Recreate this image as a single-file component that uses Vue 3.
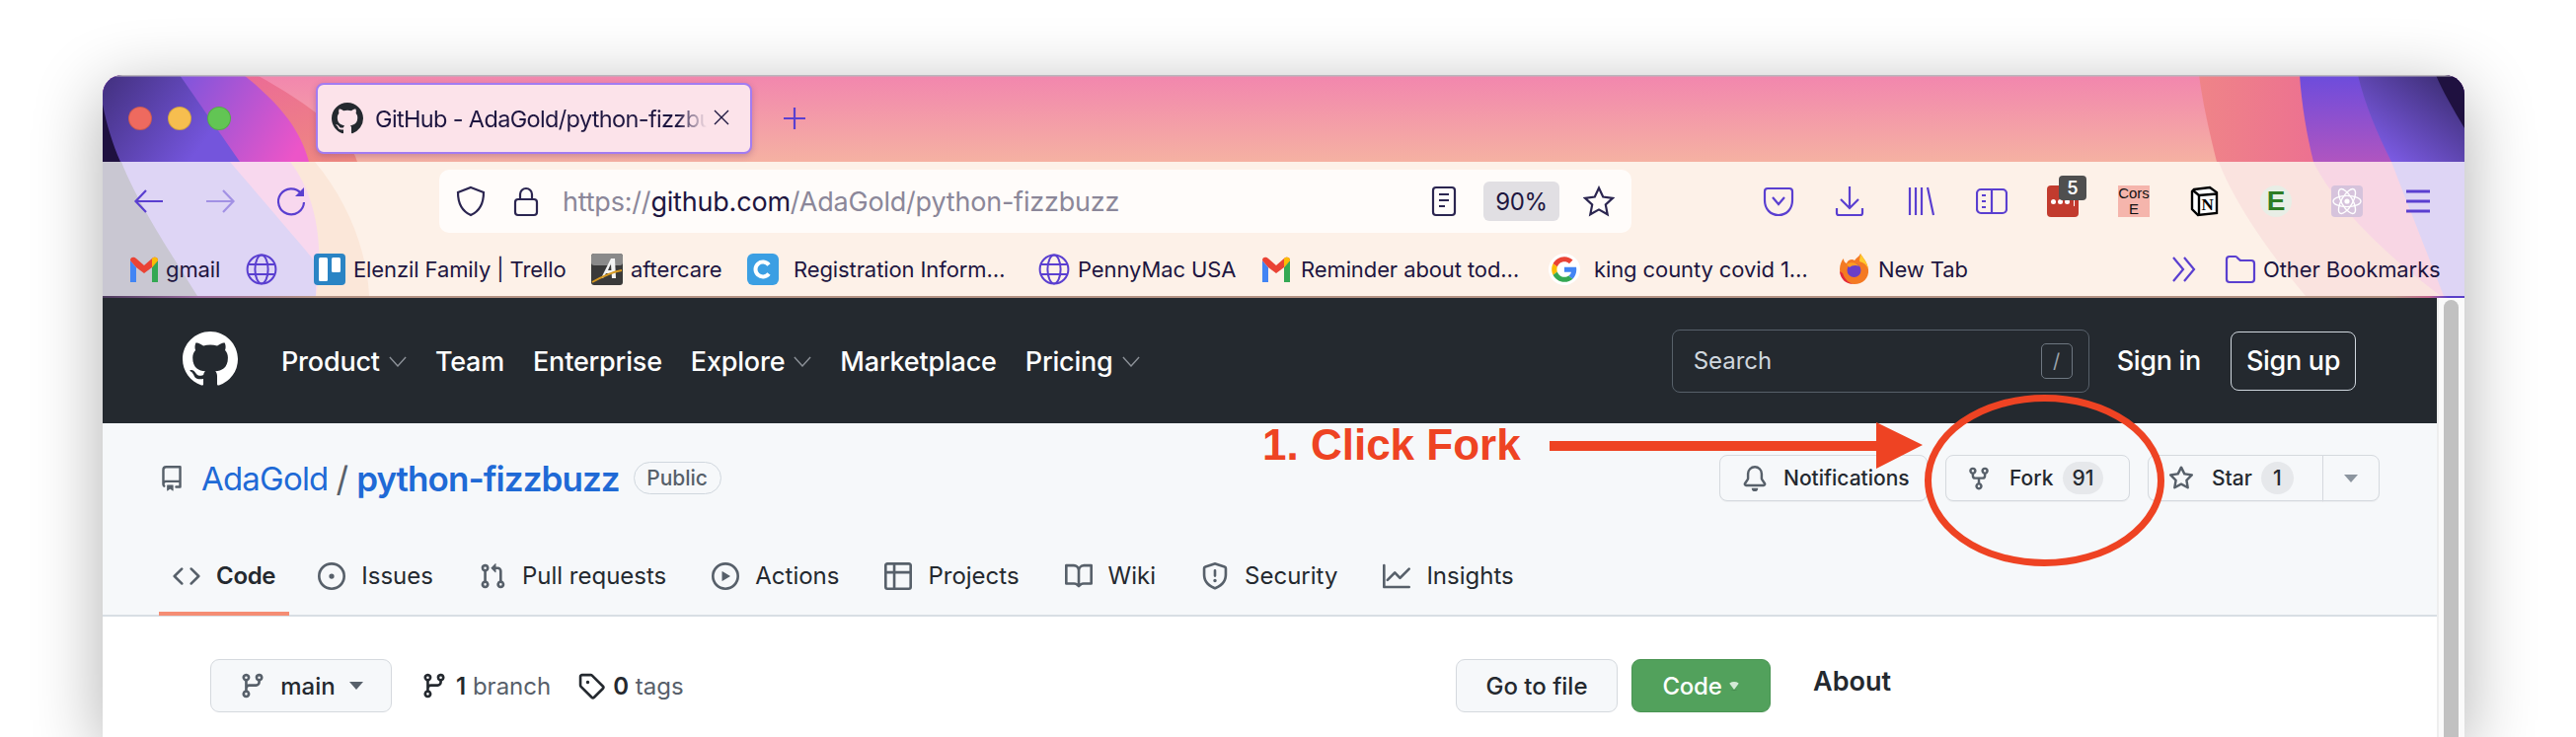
<template>
  <div class="page">
    <div class="window">
      <div class="chrome">
        <!-- wallpaper behind the browser toolbar -->
        <svg class="wallpaper" viewBox="0 0 2393 226" width="2393" height="226">
          <defs>
            <linearGradient id="pink" x1="0" y1="0" x2="0" y2="1">
              <stop offset="0" stop-color="#f286ae" />
              <stop offset="1" stop-color="#f5b1a2" />
            </linearGradient>
            <linearGradient id="salmon" x1="0" y1="0" x2="1" y2="1">
              <stop offset="0" stop-color="#ea5f9e" />
              <stop offset="1" stop-color="#ef8a80" />
            </linearGradient>
            <linearGradient id="magenta" gradientUnits="userSpaceOnUse" x1="78" y1="0" x2="200" y2="72">
              <stop offset="0" stop-color="#7d55dc" />
              <stop offset="1" stop-color="#ec55c8" />
            </linearGradient>
            <linearGradient id="violet" gradientUnits="userSpaceOnUse" x1="0" y1="0" x2="100" y2="72">
              <stop offset="0" stop-color="#42307e" />
              <stop offset="1" stop-color="#7455dc" />
            </linearGradient>
            <linearGradient id="rSalmon" x1="0" y1="0" x2="1" y2="0">
              <stop offset="0" stop-color="#ef8488" />
              <stop offset="1" stop-color="#e9589c" />
            </linearGradient>
            <linearGradient id="rPurple" x1="0" y1="0" x2="0" y2="1">
              <stop offset="0" stop-color="#6c4cdc" />
              <stop offset="1" stop-color="#b055c0" />
            </linearGradient>
            <linearGradient id="rViolet" gradientUnits="userSpaceOnUse" x1="2385" y1="0" x2="2315" y2="88">
              <stop offset="0" stop-color="#382a6c" />
              <stop offset="1" stop-color="#7d5ce6" />
            </linearGradient>
            <linearGradient id="edge" x1="0" y1="0" x2="1" y2="0">
              <stop offset="0" stop-color="#4b3a5c" />
              <stop offset="0.04" stop-color="#9a6a9e" />
              <stop offset="0.09" stop-color="#b39283" />
              <stop offset="0.97" stop-color="#b39283" />
              <stop offset="0.985" stop-color="#c2668e" />
              <stop offset="0.993" stop-color="#5a40c8" />
            </linearGradient>
          </defs>
          <rect width="2393" height="88" fill="url(#pink)" />
          <path d="M0 0L156 0C210 30 250 60 258 88L0 88Z" fill="url(#salmon)" />
          <path d="M0 0L143 0C180 30 200 55 209 88L0 88Z" fill="url(#magenta)" />
          <path d="M0 0L78 0L139 88L0 88Z" fill="url(#violet)" />
          <path d="M0 30C4 50 10 70 18 88L0 88Z" fill="#1f1140" />
          <path d="M2124 0L2393 0L2393 88L2142 88C2135 60 2128 30 2124 0Z" fill="url(#rSalmon)" />
          <path d="M2226 0L2393 0L2393 88L2240 88C2233 60 2228 30 2226 0Z" fill="url(#rPurple)" />
          <path d="M2285 0L2393 0L2393 88L2319 88C2305 60 2292 30 2285 0Z" fill="url(#rViolet)" />
          <path d="M2364 0L2393 0L2393 54C2382 35 2370 15 2364 0Z" fill="#1f1140" />
          <rect width="2393" height="1.5" fill="#b9b5bb" />

          <rect y="88" width="2393" height="136" fill="#fdf1e8" />
          <path d="M0 88L215 88C250 130 268 180 270 224L0 224Z" fill="#fbe7d9" />
          <path d="M0 88L190 88C215 120 225 170 216 224L0 224Z" fill="#f8d8ee" />
          <path d="M0 88L129 88C165 130 195 165 216 190L216 224L0 224Z" fill="#ded5f5" />
          <path d="M0 88L19 88C35 130 75 190 96 224L0 224Z" fill="#c9c7d2" />
          <path d="M2144 88L2393 88L2393 224L2232 224C2195 180 2160 130 2144 88Z" fill="#fae3df" />
          <path d="M2240 88L2393 88L2393 224L2369 224C2310 180 2260 130 2240 88Z" fill="#f8d6e4" />
          <path d="M2319 88L2393 88L2393 224L2372 224C2355 180 2335 130 2319 88Z" fill="#ded5f5" />
          <rect y="224" width="2393" height="2" fill="url(#edge)" />
        </svg>

        <div class="titlebar">
          <div class="lights">
            <span class="light red"></span>
            <span class="light yellow"></span>
            <span class="light green"></span>
          </div>
          <div class="tab">
            <svg class="tab-icon" viewBox="0 0 16 16"><path :d="oct.github" fill="#24292f" /></svg>
            <span class="tab-title">GitHub - AdaGold/python-fizzbuzz</span>
            <svg class="tab-close" viewBox="0 0 16 16"><path d="M1 1L15 15M15 1L1 15" stroke="#1e1640" stroke-width="1.4" fill="none" /></svg>
          </div>
          <svg class="new-tab" viewBox="0 0 24 24"><path d="M12 1V23M1 12H23" stroke="#5a3fd0" stroke-width="2.2" fill="none" /></svg>
        </div>

        <div class="toolbar">
          <div class="nav-btns">
            <span class="slot"><svg class="ico" viewBox="0 0 32 32"><path d="M30 16H3M13 5L2.5 16L13 27" /></svg></span>
            <span class="slot faded"><svg class="ico" viewBox="0 0 32 32"><path d="M2 16H29M19 5L29.5 16L19 27" /></svg></span>
            <span class="slot">
              <svg class="ico" viewBox="0 0 32 32">
                <path d="M26 8A13 13 0 1 0 29 17" />
                <path d="M29 2V11H20Z" fill="#5a3fd0" stroke="none" />
              </svg>
            </span>
          </div>
          <div class="urlbar">
            <svg class="url-ico shield" viewBox="0 0 32 32"><path d="M16 2L29 7C29 18 25 26 16 30C7 26 3 18 3 7Z" /></svg>
            <svg class="url-ico lock" viewBox="0 0 32 32"><rect x="5" y="14" width="22" height="16" rx="3" /><path d="M10 14V9A6 6 0 0 1 22 9V14" /></svg>
            <span class="url"><span class="dim">https://</span>github.com<span class="dim">/AdaGold/python-fizzbuzz</span></span>
            <svg class="url-ico reader" viewBox="0 0 32 32"><rect x="5" y="2" width="22" height="28" rx="3" /><path d="M11 9H21M11 15H21M11 21H17" /></svg>
            <span class="zoom-level">90%</span>
            <svg class="url-ico star" viewBox="0 0 32 32"><path d="M16 2.5L20.2 11.5L30 12.8L22.8 19.5L24.7 29.3L16 24.4L7.3 29.3L9.2 19.5L2 12.8L11.8 11.5Z" /></svg>
          </div>
          <div class="tool-icons">
            <span class="slot"><svg class="ico" viewBox="0 0 32 32"><path d="M5 3H27A3 3 0 0 1 30 6V15C30 24 24 30 16 30C8 30 2 24 2 15V6A3 3 0 0 1 5 3Z" /><path d="M10 12L16 19L22 12" /></svg></span>
            <span class="slot"><svg class="ico" viewBox="0 0 32 32"><path d="M16 1V22M7 14L16 23L25 14M3 23V28A2 2 0 0 0 5 30H27A2 2 0 0 0 29 28V23" /></svg></span>
            <span class="slot"><svg class="ico" viewBox="0 0 32 32"><path d="M5 2V30M11 2V30M17 2V30M23 2L29 30" /></svg></span>
            <span class="slot"><svg class="ico" viewBox="0 0 32 32"><rect x="1" y="4" width="30" height="24" rx="4" /><path d="M16 4V28M6 10H10M6 16H10M6 22H10" /></svg></span>
            <span class="slot">
              <span class="lastpass"><i></i><i></i><i></i><b></b></span>
              <span class="badge">5</span>
            </span>
            <span class="slot"><span class="cors">Cors<br />E</span></span>
            <span class="slot">
              <svg class="ext" viewBox="0 0 32 32">
                <path d="M5 4L21 2L28 7V28L9 30L3 24V6Z" fill="#fff" stroke="#000" stroke-width="2.4" />
                <path d="M4 5L10 10L28 8.5" fill="none" stroke="#000" stroke-width="2.4" />
                <path d="M10 10V29" stroke="#000" stroke-width="2.4" />
                <text x="18.6" y="25" text-anchor="middle" font-family="Liberation Serif, serif" font-weight="700" font-size="17">N</text>
              </svg>
            </span>
            <span class="slot"><span class="evernote">E</span></span>
            <span class="slot">
              <span class="react">
                <svg class="ext" viewBox="0 0 32 32" fill="none" stroke="#fff" stroke-width="1.4">
                  <ellipse cx="16" cy="16" rx="14" ry="5.6" />
                  <ellipse cx="16" cy="16" rx="14" ry="5.6" transform="rotate(60 16 16)" />
                  <ellipse cx="16" cy="16" rx="14" ry="5.6" transform="rotate(120 16 16)" />
                  <circle cx="16" cy="16" r="2.6" fill="#fff" stroke="none" />
                </svg>
              </span>
            </span>
            <span class="slot"><svg class="ico" viewBox="0 0 32 32"><path d="M4 6H28M4 16H28M4 26H28" stroke-width="2.8" /></svg></span>
          </div>
        </div>

        <div class="bookmarks">
          <span v-for="b in bookmarks" :key="b.label" class="bm" :style="{ width: b.w + 'px', gap: b.gap + 'px' }">
            <svg v-if="b.icon === 'gmail'" class="bm-ico" viewBox="0 0 32 32">
              <path d="M2 7V29H8V14Z" fill="#4285f4" />
              <path d="M30 7V29H24V14Z" fill="#34a853" />
              <path d="M2 7C2 3 6 3 8 5L16 12L24 5C26 3 30 3 30 7L24 14L16 20L8 14Z" fill="#ea4335" />
              <path d="M24 5C26 3 30 3 30 7L24 14Z" fill="#fbbc04" />
            </svg>
            <svg v-else-if="b.icon === 'globe'" class="bm-ico globe" viewBox="0 0 32 32">
              <circle cx="16" cy="16" r="14.4" />
              <ellipse cx="16" cy="16" rx="6.6" ry="14.4" />
              <path d="M2 11H30M2 21H30" />
            </svg>
            <svg v-else-if="b.icon === 'trello'" class="bm-ico" viewBox="0 0 32 32">
              <rect width="32" height="32" rx="4" fill="#2a84c4" />
              <rect x="5" y="4" width="9" height="24" rx="1.5" fill="#fff" />
              <rect x="18" y="4" width="9" height="15" rx="1.5" fill="#fff" />
            </svg>
            <svg v-else-if="b.icon === 'aftercare'" class="bm-ico" viewBox="0 0 32 32">
              <rect width="32" height="32" rx="3" fill="#3a3a3a" />
              <rect width="32" height="12" rx="3" fill="#8a8a8a" />
              <path d="M10 25L20 5H24L25 25H21L20.6 20H15L12 25ZM17 17H20.4L20 10Z" fill="#f4f4f4" />
              <path d="M1 29C10 24 20 19 31 17" stroke="#d69a24" stroke-width="2" fill="none" />
            </svg>
            <svg v-else-if="b.icon === 'reg'" class="bm-ico" viewBox="0 0 32 32">
              <rect width="32" height="32" rx="6" fill="#3b9fe3" />
              <path d="M22 11.5A7.5 7.5 0 1 0 22 20.5" stroke="#fff" stroke-width="4" fill="none" />
            </svg>
            <svg v-else-if="b.icon === 'google'" class="bm-ico" viewBox="-6 -6 60 60">
              <circle cx="24" cy="24" r="30" fill="#fff" />
              <path d="M24 9.5c3.54 0 6.71 1.22 9.21 3.6l6.85-6.85C35.9 2.38 30.47 0 24 0 14.62 0 6.51 5.38 2.56 13.22l7.98 6.19C12.43 13.72 17.74 9.5 24 9.5z" fill="#ea4335" />
              <path d="M46.98 24.55c0-1.57-.15-3.09-.38-4.55H24v9.02h12.94c-.58 2.96-2.26 5.48-4.78 7.18l7.73 6c4.51-4.18 7.09-10.36 7.09-17.65z" fill="#4285f4" />
              <path d="M10.53 28.59c-.48-1.45-.76-2.99-.76-4.59s.27-3.14.76-4.59l-7.98-6.19C.92 16.46 0 20.12 0 24c0 3.88.92 7.54 2.56 10.78l7.97-6.19z" fill="#fbbc05" />
              <path d="M24 48c6.48 0 11.93-2.13 15.89-5.81l-7.73-6c-2.15 1.45-4.92 2.3-8.16 2.3-6.26 0-11.57-4.22-13.47-9.91l-7.98 6.19C6.51 42.62 14.62 48 24 48z" fill="#34a853" />
            </svg>
            <svg v-else-if="b.icon === 'firefox'" class="bm-ico" viewBox="0 0 32 32">
              <path d="M22 0C24 4 29 8 30 16C31 25 24 31 16 31C8 31 1 25 1 16C1 11 3 7 5 5C5 8 6 9 8 10C9 6 14 5 16 7C18 4 21 3 22 0Z" fill="#f47a23" />
              <path d="M22 0C24 4 29 8 30 16C28 11 25 9 21 8C21 5 22 3 22 0Z" fill="#ffcb2e" />
              <path d="M4 20C6 27 12 31 16 31C8 31 2 27 1 18Z" fill="#e3283a" />
              <circle cx="15.5" cy="17" r="7" fill="#6a3fc8" />
              <path d="M8 11C12 8 18 9 21 13C17 11 13 12 11 14Z" fill="#ff9d22" />
            </svg>
            <span class="bm-label">{{ b.label }}</span>
          </span>
          <svg class="more" viewBox="0 0 28 28"><path d="M3 2L13 14L3 26M14 2L24 14L14 26" /></svg>
          <svg class="folder" viewBox="0 0 32 32"><path d="M2 6A3 3 0 0 1 5 3H11C13 3 14 7 17 7H27A3 3 0 0 1 30 10V26A3 3 0 0 1 27 29H5A3 3 0 0 1 2 26Z" /></svg>
          <span class="bm-label other">Other Bookmarks</span>
        </div>
      </div>

      <div class="viewport">
        <div class="content">
          <header class="gh-header">
            <svg class="gh-logo" viewBox="0 0 16 16"><path :d="oct.github" fill="#fff" /></svg>
            <nav class="gh-nav">
              <span v-for="n in navItems" :key="n.label" class="gh-link">
                {{ n.label }}
                <svg v-if="n.caret" class="chev" viewBox="0 0 20 12"><path d="M1 1L10 11L19 1" /></svg>
              </span>
            </nav>
            <div class="search">
              <span>Search</span>
              <span class="slash">/</span>
            </div>
            <span class="sign-in">Sign in</span>
            <span class="sign-up">Sign up</span>
          </header>

          <section class="repo-head">
            <div class="repo-row">
              <svg class="oct repo-ico" viewBox="0 0 16 16"><path :d="oct.repo" /></svg>
              <a class="owner">AdaGold</a>
              <span class="sep">/</span>
              <a class="repo-name">python-fizzbuzz</a>
              <span class="public">Public</span>
              <div class="actions">
                <button class="act notif">
                  <svg class="oct" viewBox="0 0 16 16"><path :d="oct.bell" /></svg>
                  Notifications
                </button>
                <button class="act fork">
                  <svg class="oct" viewBox="0 0 16 16"><path :d="oct.fork" /></svg>
                  Fork
                  <span class="count">91</span>
                </button>
                <div class="star-group">
                  <button class="act star-btn">
                    <svg class="oct" viewBox="0 0 16 16"><path :d="oct.star" /></svg>
                    Star
                    <span class="count">1</span>
                  </button>
                  <button class="act star-more"><span class="caret"></span></button>
                </div>
              </div>
            </div>
            <nav class="tabs">
              <a v-for="t in tabs" :key="t.label" class="tabitem" :class="{ active: t.active }">
                <svg class="oct" viewBox="0 0 16 16"><path :d="t.icon" /></svg>
                {{ t.label }}
              </a>
            </nav>
          </section>

          <section class="repo-body">
            <div class="file-nav">
              <button class="btn branch-btn">
                <svg class="oct" viewBox="0 0 16 16"><path :d="oct.branch" /></svg>
                main
                <span class="caret dark"></span>
              </button>
              <span class="meta meta-branch">
                <svg class="oct strong" viewBox="0 0 16 16"><path :d="oct.branch" /></svg>
                <span><b>1</b> branch</span>
              </span>
              <span class="meta">
                <svg class="oct strong" viewBox="0 0 16 16"><path :d="oct.tag" /></svg>
                <span><b>0</b> tags</span>
              </span>
              <button class="btn goto">Go to file</button>
              <button class="btn code-btn">Code <span class="caret light"></span></button>
            </div>
            <h2 class="about">About</h2>
          </section>
        </div>
        <div class="scrollbar"><div class="thumb"></div></div>
      </div>

      <!-- red markup drawn on top of the screenshot -->
      <div class="callout">1. Click Fork</div>
      <svg class="markup" viewBox="0 0 2393 671" width="2393" height="671">
        <path d="M1466 371H1797V352L1844 375L1797 399V381H1466Z" fill="#ee4323" />
        <ellipse cx="1967.5" cy="411" rx="118" ry="83.5" fill="none" stroke="#ee4323" stroke-width="7" />
      </svg>
    </div>
  </div>
</template>

<script setup>
const oct = {
  github: 'M8 0C3.58 0 0 3.58 0 8c0 3.54 2.29 6.53 5.47 7.59.4.07.55-.17.55-.38 0-.19-.01-.82-.01-1.49-2.01.37-2.53-.49-2.69-.94-.09-.23-.48-.94-.82-1.13-.28-.15-.68-.52-.01-.53.63-.01 1.08.58 1.23.82.72 1.21 1.87.87 2.33.66.07-.52.28-.87.51-1.07-1.78-.2-3.64-.89-3.64-3.95 0-.87.31-1.59.82-2.15-.08-.2-.36-1.02.08-2.12 0 0 .67-.21 2.2.82.64-.18 1.32-.27 2-.27.68 0 1.36.09 2 .27 1.53-1.04 2.2-.82 2.2-.82.44 1.1.16 1.92.08 2.12.51.56.82 1.27.82 2.15 0 3.07-1.87 3.75-3.65 3.95.29.25.54.73.54 1.48 0 1.07-.01 1.93-.01 2.2 0 .21.15.46.55.38A8.013 8.013 0 0016 8c0-4.42-3.58-8-8-8z',
  repo: 'M2 2.5A2.5 2.5 0 014.5 0h8.75a.75.75 0 01.75.75v12.5a.75.75 0 01-.75.75h-2.5a.75.75 0 110-1.5h1.75v-2h-8a1 1 0 00-.714 1.7.75.75 0 01-1.072 1.05A2.495 2.495 0 012 11.5v-9zm10.5-1V9h-8c-.356 0-.694.074-1 .208V2.5a1 1 0 011-1h8zM5 12.25v3.25a.25.25 0 00.4.2l1.45-1.087a.25.25 0 01.3 0L8.6 15.7a.25.25 0 00.4-.2v-3.25a.25.25 0 00-.25-.25h-3.5a.25.25 0 00-.25.25z',
  bell: 'M8 16a2 2 0 001.985-1.75c.017-.137-.097-.25-.235-.25h-3.5c-.138 0-.252.113-.235.25A2 2 0 008 16z M8 1.5A3.5 3.5 0 004.5 5v2.947c0 .346-.102.683-.294.97l-1.703 2.556a.018.018 0 00-.003.01l.001.006c0 .002.002.004.004.006a.017.017 0 00.006.004l.007.001h10.964l.007-.001a.016.016 0 00.006-.004.016.016 0 00.004-.006l.001-.007a.017.017 0 00-.003-.01l-1.703-2.554a1.75 1.75 0 01-.294-.97V5A3.5 3.5 0 008 1.5zM3 5a5 5 0 0110 0v2.947c0 .05.015.098.042.139l1.703 2.555A1.518 1.518 0 0113.482 13H2.518a1.518 1.518 0 01-1.263-2.36l1.703-2.554A.25.25 0 003 7.947V5z',
  fork: 'M5 3.25a.75.75 0 11-1.5 0 .75.75 0 011.5 0zm0 2.122a2.25 2.25 0 10-1.5 0v.878A2.25 2.25 0 005.75 8.5h1.5v2.128a2.251 2.251 0 101.5 0V8.5h1.5a2.25 2.25 0 002.25-2.25v-.878a2.25 2.25 0 10-1.5 0v.878a.75.75 0 01-.75.75h-4.5A.75.75 0 015 6.25v-.878zm3.75 7.378a.75.75 0 11-1.5 0 .75.75 0 011.5 0zm3-8.75a.75.75 0 100-1.5.75.75 0 000 1.5z',
  star: 'M8 .25a.75.75 0 01.673.418l1.882 3.815 4.21.612a.75.75 0 01.416 1.279l-3.046 2.97.719 4.192a.75.75 0 01-1.088.791L8 12.347l-3.766 1.98a.75.75 0 01-1.088-.79l.72-4.194L.818 6.374a.75.75 0 01.416-1.28l4.21-.611L7.327.668A.75.75 0 018 .25zm0 2.445L6.615 5.5a.75.75 0 01-.564.41l-3.097.45 2.24 2.184a.75.75 0 01.216.664l-.528 3.084 2.769-1.456a.75.75 0 01.698 0l2.77 1.456-.53-3.084a.75.75 0 01.216-.664l2.24-2.183-3.096-.45a.75.75 0 01-.564-.41L8 2.694v.001z',
  code: 'M4.72 3.22a.75.75 0 011.06 1.06L2.06 8l3.72 3.72a.75.75 0 11-1.06 1.06L.47 8.53a.75.75 0 010-1.06l4.25-4.25zm6.56 0a.75.75 0 10-1.06 1.06L13.94 8l-3.72 3.72a.75.75 0 101.06 1.06l4.25-4.25a.75.75 0 000-1.06l-4.25-4.25z',
  issue: 'M8 9.5a1.5 1.5 0 100-3 1.5 1.5 0 000 3z M8 0a8 8 0 100 16A8 8 0 008 0zM1.5 8a6.5 6.5 0 1113 0 6.5 6.5 0 01-13 0z',
  pull: 'M7.177 3.073L9.573.677A.25.25 0 0110 .854v4.792a.25.25 0 01-.427.177L7.177 3.427a.25.25 0 010-.354zM3.75 2.5a.75.75 0 100 1.5.75.75 0 000-1.5zm-2.25.75a2.25 2.25 0 113 2.122v5.256a2.251 2.251 0 11-1.5 0V5.372A2.25 2.25 0 011.5 3.25zM11 2.5h-1V4h1a1 1 0 011 1v5.628a2.251 2.251 0 101.5 0V5A2.5 2.5 0 0011 2.5zm1 10.25a.75.75 0 111.5 0 .75.75 0 01-1.5 0zM3.75 12a.75.75 0 100 1.5.75.75 0 000-1.5z',
  play: 'M1.5 8a6.5 6.5 0 1113 0 6.5 6.5 0 01-13 0zM8 0a8 8 0 100 16A8 8 0 008 0zM6.379 5.227A.25.25 0 006 5.442v5.117a.25.25 0 00.379.214l4.264-2.559a.25.25 0 000-.428L6.379 5.227z',
  table: 'M0 1.75C0 .784.784 0 1.75 0h12.5C15.216 0 16 .784 16 1.75v12.5A1.75 1.75 0 0114.25 16H1.75A1.75 1.75 0 010 14.25V1.75zM1.5 6.5v7.75c0 .138.112.25.25.25H5v-8H1.5zM5 5H1.5V1.75a.25.25 0 01.25-.25H5V5zm1.5 1.5v8h7.75a.25.25 0 00.25-.25V6.5h-8zm8-1.5h-8V1.5h7.75a.25.25 0 01.25.25V5z',
  book: 'M0 1.75A.75.75 0 01.75 1h4.253c1.227 0 2.317.59 3 1.501A3.744 3.744 0 0111.006 1h4.245a.75.75 0 01.75.75v10.5a.75.75 0 01-.75.75h-4.507a2.25 2.25 0 00-1.591.659l-.622.621a.75.75 0 01-1.06 0l-.622-.621A2.25 2.25 0 005.258 13H.75a.75.75 0 01-.75-.75V1.75zm8.755 3a2.25 2.25 0 012.25-2.25H14.5v9h-3.757c-.71 0-1.4.201-1.992.572l.004-7.322zm-1.504 7.324l.004-5.073-.002-2.253A2.25 2.25 0 005.003 2.5H1.5v9h3.757a3.75 3.75 0 011.994.574z',
  shield: 'M7.467.133a1.75 1.75 0 011.066 0l5.25 1.68A1.75 1.75 0 0115 3.48V7c0 1.566-.32 3.182-1.303 4.682-.983 1.498-2.585 2.813-5.032 3.855a1.7 1.7 0 01-1.33 0c-2.447-1.042-4.049-2.357-5.032-3.855C1.32 10.182 1 8.566 1 7V3.48a1.75 1.75 0 011.217-1.667l5.25-1.68zm.61 1.429a.25.25 0 00-.153 0l-5.25 1.68a.25.25 0 00-.174.238V7c0 1.358.275 2.666 1.057 3.86.784 1.194 2.121 2.34 4.366 3.297a.2.2 0 00.154 0c2.245-.956 3.582-2.104 4.366-3.298C13.225 9.666 13.5 8.36 13.5 7V3.48a.25.25 0 00-.174-.237l-5.25-1.68zM9 10.5a1 1 0 11-2 0 1 1 0 012 0zm-.25-5.75a.75.75 0 10-1.5 0v3a.75.75 0 001.5 0v-3z',
  graph: 'M1.5 1.75a.75.75 0 00-1.5 0v12.5c0 .414.336.75.75.75h14.5a.75.75 0 000-1.5H1.5V1.75zm14.28 2.53a.75.75 0 00-1.06-1.06L10 7.94 7.53 5.47a.75.75 0 00-1.06 0L2.22 9.72a.75.75 0 001.06 1.06L7 7.06l2.47 2.47a.75.75 0 001.06 0l5.25-5.25z',
  branch: 'M11.75 2.5a.75.75 0 100 1.5.75.75 0 000-1.5zm-2.25.75a2.25 2.25 0 113 2.122V6A2.5 2.5 0 0110 8.5H6a1 1 0 00-1 1v1.128a2.251 2.251 0 11-1.5 0V5.372a2.25 2.25 0 111.5 0v1.836A2.492 2.492 0 016 7h4a1 1 0 001-1v-.628A2.25 2.25 0 019.5 3.25zM4.25 12a.75.75 0 100 1.5.75.75 0 000-1.5zM3.5 3.25a.75.75 0 111.5 0 .75.75 0 01-1.5 0z',
  tag: 'M2.5 7.775V2.75a.25.25 0 01.25-.25h5.025a.25.25 0 01.177.073l6.25 6.25a.25.25 0 010 .354l-5.025 5.025a.25.25 0 01-.354 0l-6.25-6.25a.25.25 0 01-.073-.177zm-1.5 0V2.75C1 1.784 1.784 1 2.75 1h5.025c.464 0 .91.184 1.238.513l6.25 6.25a1.75 1.75 0 010 2.474l-5.026 5.026a1.75 1.75 0 01-2.474 0l-6.25-6.25A1.75 1.75 0 011 7.775zM6 5a1 1 0 100 2 1 1 0 000-2z'
}

const bookmarks = [
  { label: 'gmail', icon: 'gmail', w: 119, gap: 6 },
  { label: '', icon: 'globe', w: 69, gap: 0 },
  { label: 'Elenzil Family | Trello', icon: 'trello', w: 281, gap: 8 },
  { label: 'aftercare', icon: 'aftercare', w: 158, gap: 8 },
  { label: 'Registration Inform…', icon: 'reg', w: 295, gap: 15 },
  { label: 'PennyMac USA', icon: 'globe', w: 225, gap: 8 },
  { label: 'Reminder about tod…', icon: 'gmail', w: 292, gap: 9 },
  { label: 'king county covid 1…', icon: 'google', w: 294, gap: 14 },
  { label: 'New Tab', icon: 'firefox', w: 130, gap: 8 }
]

const navItems = [
  { label: 'Product', caret: true },
  { label: 'Team' },
  { label: 'Enterprise' },
  { label: 'Explore', caret: true },
  { label: 'Marketplace' },
  { label: 'Pricing', caret: true }
]

const tabs = [
  { label: 'Code', icon: oct.code, active: true },
  { label: 'Issues', icon: oct.issue },
  { label: 'Pull requests', icon: oct.pull },
  { label: 'Actions', icon: oct.play },
  { label: 'Projects', icon: oct.table },
  { label: 'Wiki', icon: oct.book },
  { label: 'Security', icon: oct.shield },
  { label: 'Insights', icon: oct.graph }
]
</script>

<style>
html, body {
  margin: 0;
  background: #fff;
  overflow: hidden;
}
</style>

<style scoped>
.page {
  height: 747px;
  overflow: hidden;
  padding: 76px 0 0 104px;
  box-sizing: border-box;
  font-family: Inter, "Noto Sans", sans-serif;
  color: #24292f;
}

.window {
  position: relative;
  width: 2393px;
  height: 671px;
  border-radius: 20px 20px 0 0;
  overflow: hidden;
  box-shadow: 0 16px 70px rgba(0, 0, 0, 0.32);
}

/* browser chrome */
.chrome {
  position: relative;
  height: 226px;
}

.wallpaper {
  position: absolute;
  left: 0;
  top: 0;
}

.titlebar {
  position: relative;
  height: 88px;
  display: flex;
  align-items: center;
  padding-left: 26px;
}

.lights {
  display: flex;
  gap: 16px;
}

.light {
  width: 24px;
  height: 24px;
  border-radius: 50%;
  box-sizing: border-box;
  border: 1px solid rgba(0, 0, 0, 0.14);
}

.red { background: #ee6a5f; }
.yellow { background: #f6be4f; }
.green { background: #62c554; }

.tab {
  margin-left: 86px;
  width: 442px;
  height: 72px;
  box-sizing: border-box;
  display: flex;
  align-items: center;
  padding-left: 14px;
  background: #fce3ea;
  border: 2px solid #a27cf2;
  border-radius: 8px;
  box-shadow: 0 2px 6px rgba(90, 50, 120, 0.3);
}

.tab-icon {
  width: 32px;
  height: 32px;
  flex: none;
}

.tab-title {
  margin-left: 12px;
  width: 336px;
  flex: none;
  overflow: hidden;
  white-space: nowrap;
  font-size: 23.5px;
  letter-spacing: -0.65px;
  color: #1e1640;
  -webkit-mask-image: linear-gradient(90deg, #000 91%, transparent);
  mask-image: linear-gradient(90deg, #000 91%, transparent);
}

.tab-close {
  width: 16px;
  height: 16px;
  margin: -2px 0 0 7px;
  flex: none;
}

.new-tab {
  width: 24px;
  height: 24px;
  margin-left: 31px;
}

.toolbar {
  position: relative;
  height: 76px;
  display: flex;
  align-items: center;
  padding: 4px 11px 0;
  box-sizing: border-box;
}

.nav-btns {
  display: flex;
  width: 330px;
}

.tool-icons {
  display: flex;
  margin-left: auto;
}

.slot {
  position: relative;
  width: 72px;
  height: 48px;
  display: flex;
  align-items: center;
  justify-content: center;
}

.faded {
  opacity: 0.45;
}

.ico {
  width: 32px;
  height: 32px;
  fill: none;
  stroke: #5a3fd0;
  stroke-width: 2.2;
}

.urlbar {
  width: 1208px;
  height: 64px;
  display: flex;
  align-items: center;
  background: #fffcfa;
  border-radius: 10px;
  padding: 0 17px 0 16px;
  box-sizing: border-box;
}

.url-ico {
  width: 32px;
  height: 32px;
  flex: none;
  fill: none;
  stroke: #2b2550;
  stroke-width: 2.2;
}

.lock {
  margin-left: 24px;
}

.url {
  margin-left: 21px;
  font-size: 27px;
  letter-spacing: -0.2px;
  color: #1e1640;
  white-space: nowrap;
}

.dim {
  color: #8b8799;
}

.reader {
  margin-left: auto;
}

.zoom-level {
  margin-left: 24px;
  width: 77px;
  height: 40px;
  background: #e1dfe3;
  border-radius: 6px;
  font-size: 24px;
  letter-spacing: -0.3px;
  color: #1e1640;
  display: flex;
  align-items: center;
  justify-content: center;
}

.star {
  margin-left: 24px;
}

.lastpass {
  width: 32px;
  height: 32px;
  background: #c23b2e;
  border-radius: 4px;
  display: flex;
  align-items: center;
  justify-content: center;
  gap: 2px;
}

.lastpass i {
  width: 5px;
  height: 5px;
  border-radius: 50%;
  background: #fff;
}

.lastpass b {
  width: 1.5px;
  height: 10px;
  margin-left: 2px;
  background: #fff;
}

.badge {
  position: absolute;
  left: 32px;
  top: -2px;
  width: 28px;
  height: 25px;
  border-radius: 4px;
  background: #4f4f4f;
  color: #fff;
  font-size: 18px;
  font-weight: 600;
  text-align: center;
  line-height: 25px;
}

.cors {
  width: 32px;
  height: 32px;
  background: #f5b5ac;
  color: #111;
  font-size: 15px;
  line-height: 16px;
  text-align: center;
  font-family: "Liberation Sans", sans-serif;
}

.ext {
  width: 32px;
  height: 32px;
}

.evernote {
  width: 32px;
  height: 32px;
  border-radius: 50%;
  background: #e8eee6;
  color: #2e7d24;
  font: 700 28px/32px "Liberation Sans", sans-serif;
  text-align: center;
}

.react {
  width: 32px;
  height: 32px;
  background: #d6c3dc;
  border-radius: 4px;
}

.bookmarks {
  position: relative;
  height: 60px;
  display: flex;
  align-items: center;
  padding: 6px 11px 0 26px;
  box-sizing: border-box;
}

.bm {
  display: flex;
  align-items: center;
  flex: none;
}

.bm-ico {
  width: 32px;
  height: 32px;
  flex: none;
}

.globe {
  fill: none;
  stroke: #5a3fd0;
  stroke-width: 2;
}

.bm-label {
  font-size: 22px;
  letter-spacing: -0.1px;
  color: #1e1640;
  white-space: nowrap;
}

.more {
  width: 28px;
  height: 28px;
  margin-left: auto;
  fill: none;
  stroke: #5a3fd0;
  stroke-width: 2.2;
}

.folder {
  width: 32px;
  height: 32px;
  margin-left: 27px;
  fill: none;
  stroke: #5a3fd0;
  stroke-width: 2.2;
}

.other {
  margin-left: 7px;
  width: 193px;
}

/* page */
.viewport {
  display: flex;
  height: 445px;
  background: #fff;
}

.content {
  flex: 1;
  min-width: 0;
  border-right: 2px solid #eee;
}

.scrollbar {
  width: 26px;
  background: #fafafa;
  padding: 2px 6px 0 5px;
  box-sizing: border-box;
}

.thumb {
  height: 100%;
  background: #c1c1c1;
  border-radius: 8px 8px 0 0;
}

.gh-header {
  height: 127px;
  display: flex;
  align-items: center;
  background: #24292f;
  padding: 0 82px 0 81px;
  color: #fff;
}

.gh-logo {
  width: 56px;
  height: 56px;
  margin-top: -4px;
  flex: none;
}

.gh-nav {
  display: flex;
  gap: 29px;
  margin-left: 44px;
  padding-top: 2px;
}

.gh-link {
  display: flex;
  align-items: center;
  gap: 9px;
  font-size: 27px;
  font-weight: 500;
  letter-spacing: -0.2px;
  white-space: nowrap;
}

.chev {
  width: 18px;
  height: 11px;
  fill: none;
  stroke: #8b9097;
  stroke-width: 1.6;
}

.search {
  margin-left: auto;
  width: 423px;
  height: 64px;
  box-sizing: border-box;
  display: flex;
  align-items: center;
  justify-content: space-between;
  padding: 0 16px 0 21px;
  border: 1px solid #57606a;
  border-radius: 8px;
  font-size: 24px;
  color: #d0d7de;
}

.slash {
  width: 32px;
  height: 36px;
  box-sizing: border-box;
  border: 1px solid #6e7781;
  border-radius: 5px;
  text-align: center;
  font-size: 20px;
  line-height: 34px;
  color: #9aa2ab;
}

.sign-in {
  margin-left: 28px;
  font-size: 27px;
  font-weight: 500;
  letter-spacing: -0.3px;
}

.sign-up {
  margin-left: 30px;
  width: 127px;
  height: 60px;
  box-sizing: border-box;
  border: 1px solid #d0d7de;
  border-radius: 8px;
  display: flex;
  align-items: center;
  justify-content: center;
  font-size: 27px;
  font-weight: 500;
  letter-spacing: -0.3px;
}

.repo-head {
  box-sizing: border-box;
  height: 196px;
  background: #f6f8fa;
  border-bottom: 2px solid #d8dee4;
  padding: 32px 58px 0 57px;
}

.oct {
  width: 28px;
  height: 28px;
  flex: none;
  fill: #57606a;
  fill-rule: evenodd;
}

.oct.strong {
  fill: #24292f;
}

.repo-row {
  display: flex;
  align-items: center;
  height: 47px;
}

.repo-ico {
  width: 26px;
  height: 26px;
}

.owner,
.repo-name {
  color: #1f6ad6;
  white-space: nowrap;
}

.owner {
  margin-left: 17px;
  font-size: 33px;
  letter-spacing: -0.8px;
}

.repo-name {
  font-size: 35px;
  letter-spacing: -0.95px;
  font-weight: 600;
}

.sep {
  margin: 0 8px;
  font-size: 35px;
  color: #57606a;
}

.public {
  margin-left: 14px;
  width: 89px;
  height: 33px;
  box-sizing: border-box;
  border: 1px solid #d0d7de;
  border-radius: 17px;
  font-size: 21px;
  font-weight: 500;
  color: #57606a;
  display: flex;
  align-items: center;
  justify-content: center;
}

.actions {
  display: flex;
  align-items: center;
  gap: 18px;
  margin-left: auto;
}

.act {
  height: 47px;
  box-sizing: border-box;
  display: flex;
  align-items: center;
  background: #f6f8fa;
  border: 1px solid #d5d9de;
  border-radius: 8px;
  box-shadow: 0 1px 0 rgba(27, 31, 36, 0.04);
  font: 500 21px Inter, sans-serif;
  color: #24292f;
  padding: 0;
}

.act .oct {
  width: 26px;
  height: 26px;
}

.notif {
  width: 211px;
  padding-left: 22px;
  gap: 16px;
}

.fork {
  width: 187px;
  padding-left: 20px;
  gap: 18px;
}

.count {
  min-width: 33px;
  padding: 0 10px;
  box-sizing: border-box;
  height: 33px;
  border-radius: 17px;
  background: #e6e8eb;
  display: flex;
  align-items: center;
  justify-content: center;
  margin-left: -9px;
}

.star-group {
  display: flex;
}

.star-btn {
  width: 178px;
  padding-left: 20px;
  gap: 18px;
  border-radius: 8px 0 0 8px;
}

.star-more {
  width: 58px;
  margin-left: -1px;
  border-radius: 0 8px 8px 0;
  justify-content: center;
}

.caret {
  width: 0;
  height: 0;
  border-left: 7px solid transparent;
  border-right: 7px solid transparent;
  border-top: 8px solid #8c959f;
}

.caret.dark {
  border-top-color: #57606a;
}

.caret.light {
  border-top-color: #d3ead6;
  border-left-width: 6px;
  border-right-width: 6px;
  border-top-width: 8px;
}

.tabs {
  display: flex;
  gap: 18px;
  height: 116px;
  margin-top: 0;
  padding-top: 36px;
  box-sizing: border-box;
}

.tabitem {
  display: flex;
  align-items: center;
  gap: 16px;
  height: 80px;
  padding: 3px 14px 0;
  box-sizing: border-box;
  font-size: 24px;
  white-space: nowrap;
  border-bottom: 4px solid transparent;
}

.tabitem.active {
  font-weight: 600;
  letter-spacing: -0.3px;
  margin-right: -3px;
  border-bottom-color: #f58d74;
}

.repo-body {
  display: flex;
  padding: 43px 0 0 109px;
}

.file-nav {
  display: flex;
  align-items: center;
  width: 1581px;
  height: 54px;
}

.btn {
  height: 54px;
  box-sizing: border-box;
  border: 1px solid #d5d9de;
  border-radius: 9px;
  background: #f6f8fa;
  font: 500 24px Inter, sans-serif;
  color: #24292f;
  display: flex;
  align-items: center;
  justify-content: center;
  padding: 0;
}

.branch-btn {
  width: 184px;
  gap: 14px;
}

.meta {
  display: flex;
  align-items: center;
  gap: 8px;
  margin-left: 27px;
  font-size: 24px;
  color: #57606a;
}

.meta-branch {
  margin-left: 29px;
}

.meta b {
  color: #24292f;
  font-weight: 600;
}

.goto {
  margin-left: auto;
  width: 164px;
}

.code-btn {
  margin-left: 14px;
  width: 141px;
  gap: 6px;
  background: #52a15c;
  border-color: #4a9453;
  color: #fff;
  letter-spacing: -0.2px;
}

.about {
  margin: 0 0 0 43px;
  font-size: 27px;
  font-weight: 600;
  line-height: 46px;
}

/* markup */
.callout {
  position: absolute;
  left: 1175px;
  top: 351px;
  font: 700 44px/48px "Liberation Sans", sans-serif;
  color: #ee4323;
  white-space: nowrap;
}

.markup {
  position: absolute;
  left: 0;
  top: 0;
  pointer-events: none;
}
</style>
